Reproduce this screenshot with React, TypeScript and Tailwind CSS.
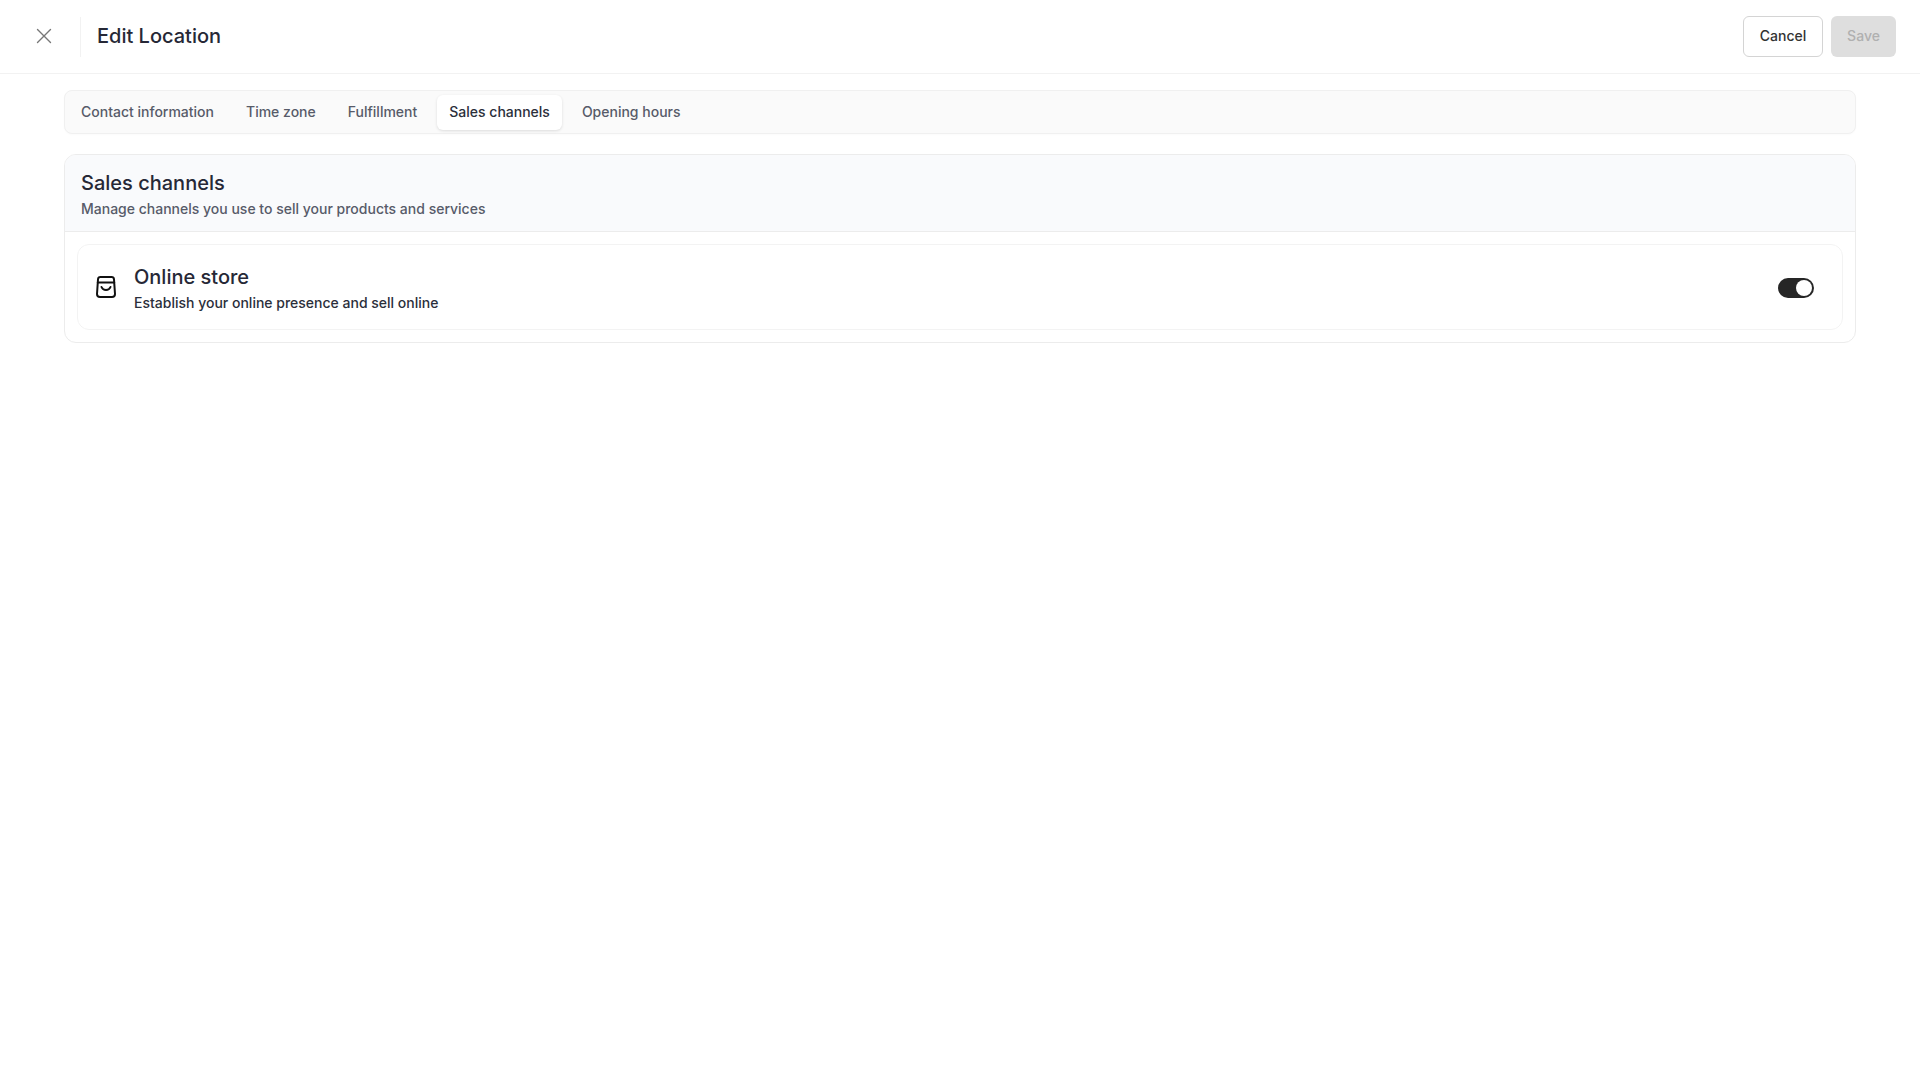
export default function App() {
  const font = { fontFamily: "Inter, sans-serif" };
  return (
    <div style={font} className="min-h-screen bg-white text-[#111827]">
      <header className="flex h-[74px] items-center justify-between border-b border-[#f2f2f2] pl-6 pr-6">
        <div className="flex items-center">
          <button className="flex h-10 w-10 items-center justify-center pb-[2px] text-[#777777]">
            <svg width="20" height="20" viewBox="0 0 20 20" fill="none" stroke="currentColor" strokeWidth="1.4" strokeLinecap="round">
              <path d="M3.5 3.5L16.5 16.5M16.5 3.5L3.5 16.5" />
            </svg>
          </button>
          <div className="ml-4 h-10 w-px bg-[#f2f2f2]" />
          <h1 className="ml-4 pb-[2px] text-xl font-medium text-[#262836]">Edit Location</h1>
        </div>
        <div className="flex items-center gap-2">
          <button className="h-[41px] w-[80px] rounded-md border border-[#d4d4d4] bg-white pb-[2px] text-sm font-medium text-[#333333]">Cancel</button>
          <button className="h-[41px] w-[65px] rounded-md bg-[#dedede] pb-[2px] text-sm font-medium text-[#b0b0b0]">Save</button>
        </div>
      </header>
      <main className="px-16 pt-4">
        <nav className="flex h-[44px] items-center gap-2 rounded-lg border border-[#f0f0f0] bg-[#fafafa] px-1 shadow-[0_1px_2px_rgba(0,0,0,0.02)]">
          {["Contact information", "Time zone", "Fulfillment", "Sales channels", "Opening hours"].map((t) => (
            <button
              key={t}
              className={
                t === "Sales channels"
                  ? "h-[35px] rounded-md bg-white px-3 text-sm font-medium text-[#2b2f3b] shadow-[0_1px_3px_rgba(0,0,0,0.12)]"
                  : "h-[35px] rounded-md px-3 text-sm font-medium text-[#575b69]"
              }
            >
              {t}
            </button>
          ))}
        </nav>
        <section className="mt-5 overflow-hidden rounded-xl border border-[#ececec] bg-white">
          <div className="h-[77px] border-b border-[#ececec] bg-[#f9fafc] px-4 pt-[14px]">
            <h2 className="text-xl font-medium leading-7 text-[#262836]">Sales channels</h2>
            <p className="mt-[2px] text-sm font-medium leading-5 text-[#575b69]">Manage channels you use to sell your products and services</p>
          </div>
          <div className="p-3">
            <div className="flex h-[86px] items-center justify-between rounded-xl border border-[#f3f3f3] px-4">
              <div className="flex items-center gap-4">
                <svg width="24" height="24" viewBox="0 0 24 24" fill="none" stroke="#111" strokeWidth="2" strokeLinecap="round" strokeLinejoin="round">
                  <path d="M6.5 2h11a2.5 2.5 0 0 1 2.5 2.3l1 14.7a3 3 0 0 1-3 3H6a3 3 0 0 1-3-3L4 4.3A2.5 2.5 0 0 1 6.5 2Z" />
                  <path d="M3.8 7.5H20.2" />
                  <path d="M7.5 12c.8 2 2.6 3 4.5 3s3.7-1 4.5-3" />
                </svg>
                <div className="mt-[2px]">
                  <div className="text-xl font-medium leading-7 text-[#262836]">Online store</div>
                  <div className="mt-[2px] text-sm font-medium leading-5 text-[#2b2f3b]">Establish your online presence and sell online</div>
                </div>
              </div>
              <div className="mr-3 mt-[2px] flex h-5 w-9 items-center justify-end rounded-full bg-[#262626] p-[2px]">
                <div className="h-4 w-4 rounded-full bg-white" />
              </div>
            </div>
          </div>
        </section>
      </main>
    </div>
  );
}
